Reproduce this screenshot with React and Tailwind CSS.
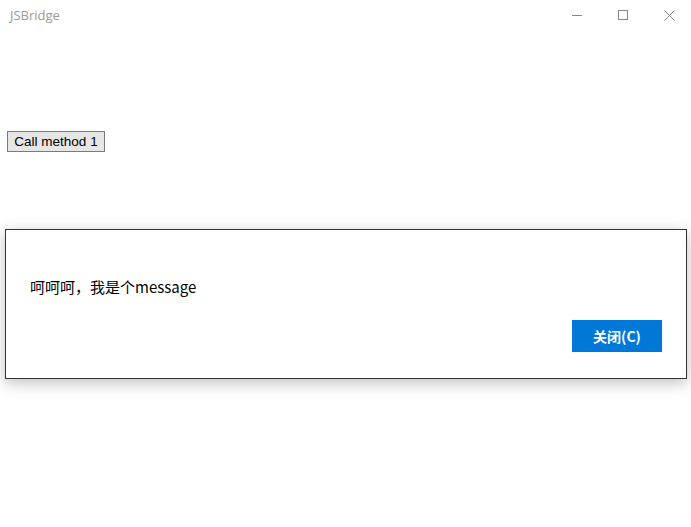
import React from "react";

export default function App() {
  return (
    <div className="relative w-[691px] h-[527px] bg-white overflow-hidden" style={{ fontFamily: '"Noto Sans", "Noto Sans CJK SC", sans-serif' }}>
      <div className="flex h-[30px] items-center">
        <div className="pl-[10px] text-[13px] text-[#9a9a9a] leading-none" style={{ fontFamily: '"Open Sans", "Noto Sans", sans-serif' }}>JSBridge</div>
        <div className="ml-auto flex h-full">
          <div className="w-[46px] h-full flex items-center justify-center pl-[2px]">
            <svg width="10" height="10" viewBox="0 0 10 10"><path d="M0 5.5h10" stroke="#888" strokeWidth="1" /></svg>
          </div>
          <div className="w-[46px] h-full flex items-center justify-center pl-[2px]">
            <svg width="10" height="10" viewBox="0 0 10 10"><rect x="0.5" y="0.5" width="9" height="9" fill="none" stroke="#888" strokeWidth="1" /></svg>
          </div>
          <div className="w-[46px] h-full flex items-center justify-center pl-[2px]">
            <svg width="11" height="11" viewBox="0 0 11 11"><path d="M0.5 0.5l10 10M10.5 0.5l-10 10" stroke="#888" strokeWidth="1" /></svg>
          </div>
        </div>
      </div>
      <div className="pl-[7px] pt-[101px]">
        <button className="h-[21px] w-[98px] border border-[#7a7a7a] bg-[#e6e6e6] text-[13.5px] text-black leading-none flex items-center justify-center" style={{ fontFamily: '"Liberation Sans", Arial, sans-serif' }}>
          Call method 1
        </button>
      </div>
      <div className="absolute left-[5px] top-[229px] w-[682px] h-[150px] bg-white border border-[#333] shadow-[0_4px_14px_rgba(0,0,0,0.25)] flex flex-col">
        <div className="pl-[24px] pt-[47px] text-[15px] text-black leading-[20px]" style={{ fontFamily: '"Noto Sans CJK SC", "Noto Sans", sans-serif' }}>
          呵呵呵，我是个message
        </div>
        <div className="flex justify-end pr-[24px] mt-[23px]">
          <div className="w-[90px] h-[32px] bg-[#0078d7] text-white text-[14px] font-bold flex items-center justify-center" style={{ fontFamily: '"Noto Sans CJK SC", "Noto Sans", sans-serif' }}>
            关闭(C)
          </div>
        </div>
      </div>
    </div>
  );
}
